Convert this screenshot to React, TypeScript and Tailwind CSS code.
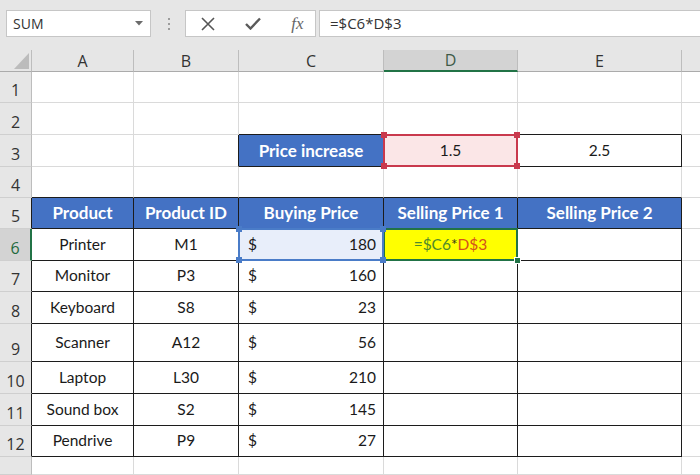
import React from 'react';

const colWidths = ['w-[102px]', 'w-[105px]', 'w-[145px]', 'w-[134px]', 'w-[164px]', 'flex-1'];
const colLetters = ['A', 'B', 'C', 'D', 'E', ''];
const rowHeights = [
  'h-[31px]', 'h-[32px]', 'h-[32px]', 'h-[31px]', 'h-[31px]', 'h-[32px]', 'h-[31px]',
  'h-[32px]', 'h-[38px]', 'h-[32px]', 'h-[32px]', 'h-[31px]', 'h-[18px]',
];

const products: [string, string, number][] = [
  ['Printer', 'M1', 180],
  ['Monitor', 'P3', 160],
  ['Keyboard', 'S8', 23],
  ['Scanner', 'A12', 56],
  ['Laptop', 'L30', 210],
  ['Sound box', 'S2', 145],
  ['Pendrive', 'P9', 27],
];

const headers = ['Product', 'Product ID', 'Buying Price', 'Selling Price 1', 'Selling Price 2'];

const inTable = (r: number, c: number) =>
  (r >= 5 && r <= 12 && c >= 0 && c <= 4) || (r === 3 && c >= 2 && c <= 4);

function Corners({ color }: { color: string }) {
  return (
    <>
      <div className={`absolute -left-[4px] -top-[4px] w-[6px] h-[6px] ${color}`} />
      <div className={`absolute -right-[4px] -top-[4px] w-[6px] h-[6px] ${color}`} />
      <div className={`absolute -left-[4px] -bottom-[4px] w-[6px] h-[6px] ${color}`} />
      <div className={`absolute -right-[4px] -bottom-[4px] w-[6px] h-[6px] ${color}`} />
    </>
  );
}

function Cell({ r, c }: { r: number; c: number }) {
  const right = inTable(r, c) || inTable(r, c + 1) ? 'border-r-[#1c1c1c]' : 'border-r-[#dadada]';
  const bottom = inTable(r, c) || inTable(r + 1, c) ? 'border-b-[#1c1c1c]' : 'border-b-[#dadada]';
  const edge = c === 5 ? 'border-b' : 'border-r border-b';

  let bg = 'bg-white';
  let content: React.ReactNode = null;
  let overlay: React.ReactNode = null;

  if (r === 3 && c === 2) {
    bg = 'bg-[#4472c4]';
    content = <span className="w-full text-center text-[17px] font-bold text-white">Price increase</span>;
  } else if (r === 3 && c === 3) {
    bg = 'bg-[#fbe6e7]';
    content = <span className="w-full text-center">1.5</span>;
    overlay = (
      <div className="absolute -left-px -top-px -right-px -bottom-px z-10 border-2 border-[#c9394d]">
        <Corners color="bg-[#c9394d]" />
      </div>
    );
  } else if (r === 3 && c === 4) {
    content = <span className="w-full text-center">2.5</span>;
  } else if (r === 5 && c <= 4) {
    bg = 'bg-[#4472c4]';
    content = <span className="w-full text-center text-[17px] font-bold text-white">{headers[c]}</span>;
  } else if (r >= 6 && r <= 12 && c <= 2) {
    const [name, id, price] = products[r - 6];
    if (c === 0) content = <span className="w-full text-center">{name}</span>;
    if (c === 1) content = <span className="w-full text-center">{id}</span>;
    if (c === 2)
      content = (
        <div className="flex w-full justify-between pl-[9px] pr-[7px]">
          <span>$</span>
          <span>{price}</span>
        </div>
      );
    if (r === 6 && c === 2) {
      bg = 'bg-[#e8eefa]';
      overlay = (
        <div className="absolute -left-px -top-px -right-px -bottom-px z-20 border-2 border-[#4a7cc8]">
          <Corners color="bg-[#4a7cc8]" />
        </div>
      );
    }
  } else if (r === 6 && c === 3) {
    bg = 'bg-[#ffff00]';
    content = (
      <span className="w-full text-center">
        <span className="text-[#4f8a2c]">=$C6</span>
        <span className="text-[#3a3a1a]">*</span>
        <span className="text-[#d4521c]">D$3</span>
      </span>
    );
    overlay = (
      <div className="absolute -left-px -top-px -right-px -bottom-px z-10 border-2 border-[#217346]">
        <div className="absolute -right-[5px] -bottom-[5px] w-[7px] h-[7px] bg-[#217346] border border-white" />
      </div>
    );
  }

  return (
    <div className={`relative flex items-center ${colWidths[c]} ${edge} ${right} ${bottom} ${bg}`}>
      {content}
      {overlay}
    </div>
  );
}

function RowHeader({ r }: { r: number }) {
  const active = r === 6;
  const side = active
    ? 'border-r-2 border-r-[#217346] bg-[#d3d3d3] text-[#1f6a3d]'
    : r >= 5 && r <= 12
      ? 'border-r border-r-[#1c1c1c] bg-[#e6e6e6] text-[#333]'
      : 'border-r border-r-[#bdbdbd] bg-[#e6e6e6] text-[#333]';
  return (
    <div
      className={`flex w-[32px] shrink-0 items-end justify-center border-b border-b-[#cfcfcf] pb-[1px] font-['Open_Sans',sans-serif] text-[16px] leading-[22px] ${side}`}
    >
      {r <= 12 ? r : ''}
    </div>
  );
}

function Toolbar() {
  return (
    <div className="flex h-[50px] items-start bg-[#e6e6e6] pt-[10px] font-['Open_Sans',sans-serif] text-[#333]">
      <div className="ml-[6px] flex h-[27px] w-[145px] items-center justify-between border border-[#c6c6c6] bg-white pl-[6px] pr-[7px] text-[14px]">
        <span>SUM</span>
        <svg width="8" height="5" viewBox="0 0 8 5">
          <path d="M0 0 L8 0 L4 4.5 Z" fill="#6b6b6b" />
        </svg>
      </div>
      <div className="ml-[17px] mr-[15px] flex h-[27px] flex-col items-center justify-center gap-[3px]">
        <div className="h-[2px] w-[2px] bg-[#9c9c9c]" />
        <div className="h-[2px] w-[2px] bg-[#9c9c9c]" />
        <div className="h-[2px] w-[2px] bg-[#9c9c9c]" />
      </div>
      <div className="flex h-[27px] w-[131px] items-center border border-[#c6c6c6] bg-white">
        <div className="flex w-[42px] justify-center pl-[1px]">
          <svg width="14" height="14" viewBox="0 0 14 14">
            <path d="M1 1 L13 13 M13 1 L1 13" stroke="#555" strokeWidth="1.6" fill="none" />
          </svg>
        </div>
        <div className="flex w-[50px] justify-center">
          <svg width="16" height="13" viewBox="0 0 16 13">
            <path d="M1 7 L5.5 11.5 L15 1.5" stroke="#5a5a5a" strokeWidth="2.4" fill="none" />
          </svg>
        </div>
        <div className="flex flex-1 justify-center pl-[2px]">
          <span className="font-['Liberation_Serif',serif] text-[17px] italic leading-none text-[#666]">fx</span>
        </div>
      </div>
      <div className="ml-[3px] flex h-[27px] flex-1 items-center border border-r-0 border-[#c6c6c6] bg-white pl-[10px] text-[15px]">
        =$C6*D$3
      </div>
    </div>
  );
}

function ColumnHeaders() {
  return (
    <div className="flex h-[22px] bg-[#e6e6e6] font-['Open_Sans',sans-serif] text-[16px] text-[#333]">
      <div className="relative w-[32px] border-r border-b border-r-[#bdbdbd] border-b-[#ababab]">
        <svg className="absolute left-[14px] top-[3px]" width="15" height="16" viewBox="0 0 15 16">
          <path d="M15 0 L15 16 L0 16 Z" fill="#bcbcbc" />
        </svg>
      </div>
      {colLetters.map((l, c) => {
        const active = c === 3;
        return (
          <div
            key={c}
            className={`flex items-center justify-center leading-none ${colWidths[c]} ${
              c === 5 ? '' : 'border-r border-r-[#bdbdbd]'
            } ${active ? 'border-b-2 border-b-[#217346] bg-[#d3d3d3] text-[#3e5a48]' : 'border-b border-b-[#ababab]'}`}
          >
            {l}
          </div>
        );
      })}
    </div>
  );
}

export default function App() {
  return (
    <div className="h-[475px] w-[700px] overflow-hidden bg-white">
      <Toolbar />
      <ColumnHeaders />
      <div className="font-['Lato',sans-serif] text-[15.5px] text-[#1a1a1a]">
        {rowHeights.map((h, i) => {
          const r = i + 1;
          return (
            <div key={r} className={`flex ${h}`}>
              <RowHeader r={r} />
              {colWidths.map((_, c) => (
                <Cell key={c} r={r} c={c} />
              ))}
            </div>
          );
        })}
      </div>
    </div>
  );
}
